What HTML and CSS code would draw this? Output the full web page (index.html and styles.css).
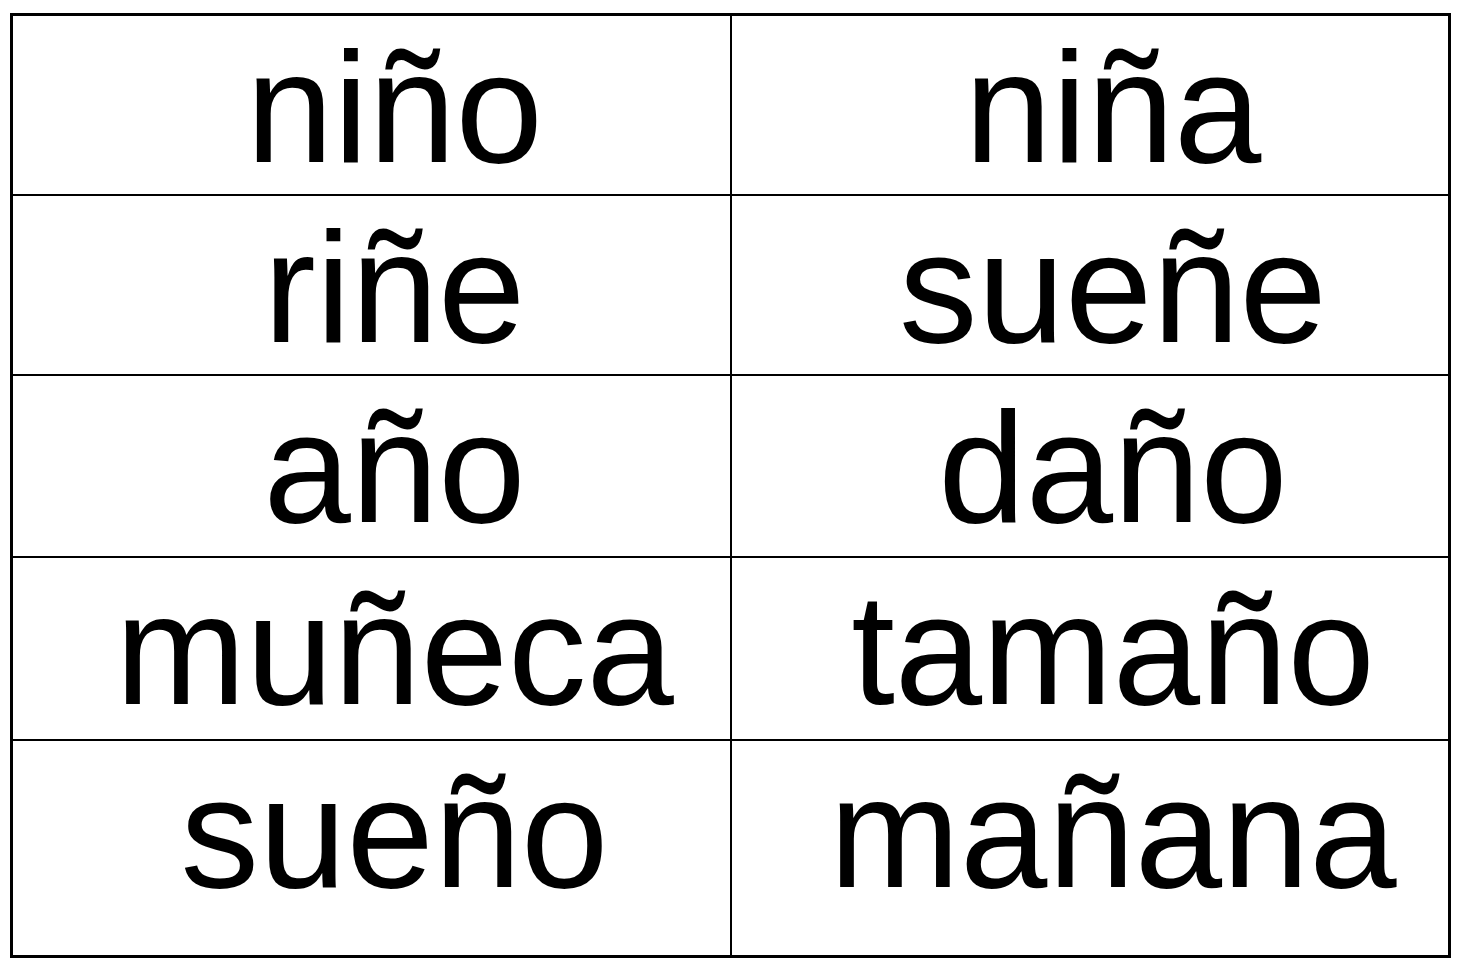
FILE: index.html
```html
<!DOCTYPE html>
<html lang="es">
<head>
<meta charset="utf-8">
<title>Palabras con ñ</title>
<link rel="stylesheet" href="styles.css">
</head>
<body>
<div class="sheet">
  <div class="cell">niño</div><div class="cell">niña</div>
  <div class="cell">riñe</div><div class="cell">sueñe</div>
  <div class="cell">año</div><div class="cell">daño</div>
  <div class="cell">muñeca</div><div class="cell">tamaño</div>
  <div class="cell last">sueño</div><div class="cell last">mañana</div>
</div>
</body>
</html>
```
FILE: styles.css
```css
html, body {
  margin: 0;
  padding: 0;
  background: #ffffff;
}
body {
  padding: 13px 0 0 10px;
}
.sheet {
  box-sizing: border-box;
  width: 1441px;
  border: 3px solid #000;
  display: grid;
  grid-template-columns: 719px 716px;
  grid-template-rows: 180px 180px 182px 183px 214px;
  font-family: "Liberation Sans", Arial, sans-serif;
  font-size: 157px;
  color: #000;
}
.cell {
  line-height: 183px;
  text-align: center;
  padding-left: 46px;
  border-bottom: 2px solid #000;
  white-space: nowrap;
  overflow: visible;
}
.cell:nth-child(odd) {
  border-right: 2px solid #000;
}
.cell.last {
  border-bottom: none;
}
```
